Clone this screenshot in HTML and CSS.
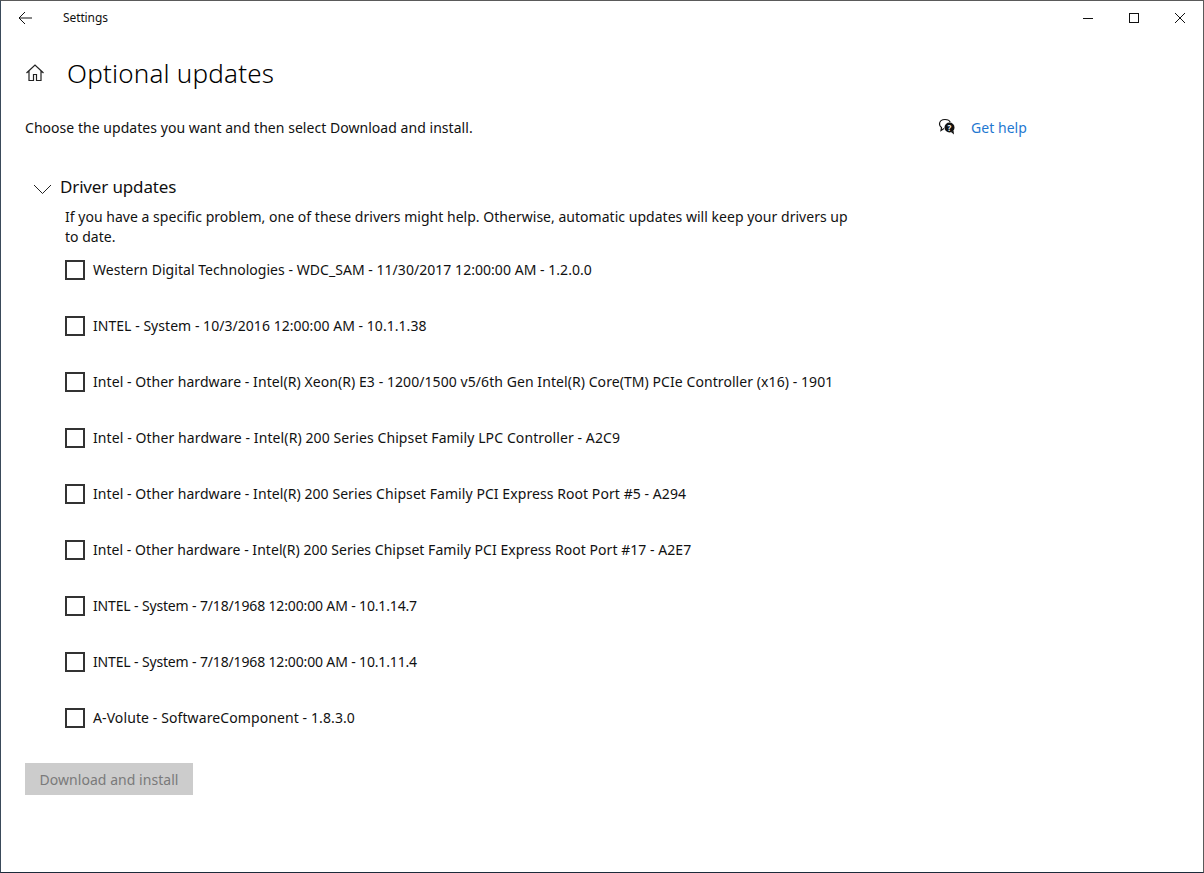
FILE: index.html
```html
<!DOCTYPE html>
<html lang="en">
<head>
<meta charset="utf-8">
<title>Settings</title>
<link rel="stylesheet" href="styles.css">
</head>
<body>
<div class="window">
  <header class="titlebar">
    <svg class="back" width="16" height="14" viewBox="0 0 16 14"><path d="M7 1 1 7l6 6M1 7h13" fill="none" stroke="#111" stroke-width="1"/></svg>
    <span class="app-name">Settings</span>
    <div class="controls">
      <svg width="12" height="12" viewBox="0 0 12 12"><path d="M1 6.5h10" stroke="#111" fill="none"/></svg>
      <svg width="12" height="12" viewBox="0 0 12 12"><rect x="1.500" y="1.500" width="9" height="9" stroke="#111" fill="none"/></svg>
      <svg width="12" height="12" viewBox="0 0 12 12"><path d="M1 1l10 10M11 1 1 11" stroke="#111" fill="none"/></svg>
    </div>
  </header>
  <div class="page-head">
    <svg class="home" width="20" height="20" viewBox="0 0 20 20"><path d="M1.500 10 10 2l8.500 8M4 8v9.500h4.500v-6h3v6H16V8" fill="none" stroke="#222" stroke-width="1.200"/></svg>
    <h1>Optional updates</h1>
  </div>
  <div class="intro">
    <p>Choose the updates you want and then select Download and install.</p>
    <a class="help" href="#">
      <svg width="18" height="18" viewBox="0 0 18 18"><path d="M7 1.500C3.800 1.500 1.500 3.500 1.500 6c0 1.500.8 2.700 2 3.500L3 12.500l3-2" fill="none" stroke="#111" stroke-width="1.200"/><path d="M7 1.500c2.500 0 4.500 1 5.200 2.800" fill="none" stroke="#111" stroke-width="1.200"/><circle cx="11.500" cy="9.500" r="5" fill="#111"/><path d="M13 14l3 2.500-.5-4z" fill="#111"/><text x="11.500" y="12.500" class="q">?</text></svg>
      <span>Get help</span>
    </a>
  </div>
  <div class="section-head">
    <svg class="chev" width="20" height="10" viewBox="0 0 20 10"><path d="M1 1l8.500 8.500L18 1" fill="none" stroke="#222" stroke-width="1"/></svg>
    <h2>Driver updates</h2>
  </div>
  <p class="desc">If you have a specific problem, one of these drivers might help. Otherwise, automatic updates will keep your drivers up to date.</p>
  <ul class="list">
    <li><span class="box"></span>Western Digital Technologies - WDC_SAM - 11/30/2017 12:00:00 AM - 1.2.0.0</li>
    <li><span class="box"></span>INTEL - System - 10/3/2016 12:00:00 AM - 10.1.1.38</li>
    <li class="wide-sm"><span class="box"></span>Intel - Other hardware - Intel(R) Xeon(R) E3 - 1200/1500 v5/6th Gen Intel(R) Core(TM) PCIe Controller (x16) - 1901</li>
    <li class="wide"><span class="box"></span>Intel - Other hardware - Intel(R) 200 Series Chipset Family LPC Controller - A2C9</li>
    <li class="wide-sm"><span class="box"></span>Intel - Other hardware - Intel(R) 200 Series Chipset Family PCI Express Root Port #5 - A294</li>
    <li><span class="box"></span>Intel - Other hardware - Intel(R) 200 Series Chipset Family PCI Express Root Port #17 - A2E7</li>
    <li class="tight"><span class="box"></span>INTEL - System - 7/18/1968 12:00:00 AM - 10.1.14.7</li>
    <li class="tight"><span class="box"></span>INTEL - System - 7/18/1968 12:00:00 AM - 10.1.11.4</li>
    <li class="wide"><span class="box"></span>A-Volute - SoftwareComponent - 1.8.3.0</li>
  </ul>
  <button class="install" disabled>Download and install</button>
</div>
</body>
</html>
```
FILE: styles.css
```css
* { box-sizing: border-box; }
html, body { margin: 0; padding: 0; background: #fff; }
body { font-family: "Noto Sans", "Liberation Sans", sans-serif; color: #111; }
.window {
  width: 1204px; height: 873px; border: 1px solid #5a5a5a; border-left-color: #3a4a5a; border-bottom-color: #1c2b3a;
  background: #fff; overflow: hidden; font-size: 14px; letter-spacing: 0.04px;
}
.titlebar { height: 33px; display: flex; align-items: center; }
.back { margin-left: 17px; }
.app-name { margin-left: 29px; font-size: 12px; letter-spacing: -0.1px; }
.controls { margin-left: auto; margin-right: 17px; display: flex; gap: 34px; }
.page-head { display: flex; align-items: center; height: 78px; padding-left: 24px; }
h1 { margin: 0 0 0 22px; font-size: 26px; font-weight: 300; letter-spacing: 0.2px; color: #000; }
.intro { display: flex; align-items: center; height: 30px; padding-left: 24px; }
.intro p { margin: 0; width: 913px; }
.help { display: flex; align-items: center; gap: 15px; color: #1f78d1; text-decoration: none; }
.q { font-size: 8px; font-weight: 700; fill: #fff; text-anchor: middle; }
.section-head { display: flex; align-items: center; height: 30px; margin-top: 29px; padding-left: 32px; gap: 7px; }
.chev { margin-top: 6px; }
h2 { margin: 0; font-size: 17px; font-weight: 400; letter-spacing: -0.15px; }
.desc { margin: 6px 0 0 64px; width: 790px; line-height: 20px; letter-spacing: 0.025px; }
.list { list-style: none; margin: 0; padding: 0 0 0 64px; }
.list li { height: 56px; display: flex; align-items: center; gap: 8px; }
.list li:first-child { margin-top: -6px; }
.list li.wide { letter-spacing: 0.1px; }
.list li.wide-sm { letter-spacing: 0.07px; }
.list li.tight { letter-spacing: -0.15px; }
.box { width: 20px; height: 20px; margin-top: 2px; border: 2px solid #333; flex: none; }
.install {
  display: block; margin: 18px 0 0 24px; width: 168px; height: 32px; border: 0; background: #ccc; color: #7a7a7a;
  font: inherit; letter-spacing: inherit; padding: 0;
}
```
